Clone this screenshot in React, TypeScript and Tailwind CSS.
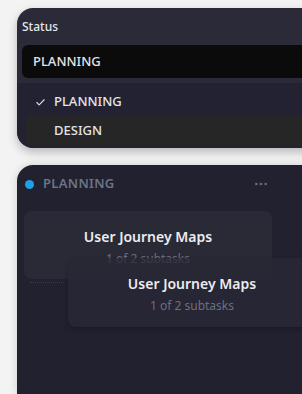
import { Check, MoreHorizontal } from 'lucide-react';

const font = { fontFamily: '"Noto Sans", "Open Sans", sans-serif' };

function TaskCard({ title, meta, className }: { title: string; meta: string; className?: string }) {
  return (
    <div className={`w-[248px] h-[68px] rounded-lg flex flex-col items-center pt-[15px] ${className ?? ''}`}>
      <div className="text-[14px] leading-[22px] font-semibold text-[#ececf1]">{title}</div>
      <div className="text-[12px] leading-[16px] mt-[3px] text-[#6e6e7c]">{meta}</div>
    </div>
  );
}

export default function App() {
  return (
    <div
      className="w-[302px] h-[394px] overflow-hidden bg-[#f3f3f3] pt-[8px] pl-[17px] flex flex-col gap-[17px]"
      style={font}
    >
      {/* status select with open menu */}
      <div className="w-[320px] rounded-2xl bg-[#2a2a39] shadow-[0_4px_10px_rgba(0,0,0,0.25)] overflow-hidden shrink-0">
        <div className="px-[5px] pt-[10px] pb-[5px]">
          <div className="text-[12px] leading-[18px] text-[#e6e6ec] font-medium">Status</div>
          <div className="mt-[9px] h-[33px] rounded-md bg-[#0b0b0c] flex items-center pl-[11px] text-[13px] font-medium text-[#e4e4e8]">
            PLANNING
          </div>
        </div>
        <div className="bg-[#222232] pl-[9px] pt-[5px] pb-[3px] rounded-b-2xl">
          <div className="h-[28px] flex items-center text-[13px] font-medium text-[#e4e4ea]">
            <Check className="w-[11px] h-[11px] ml-[9px] mr-[8px] text-[#d8d8de]" strokeWidth={2.5} />
            PLANNING
          </div>
          <div className="h-[29px] flex items-center pl-[28px] rounded-l bg-[#262626] text-[13px] font-medium text-[#e4e4ea]">
            DESIGN
          </div>
        </div>
      </div>

      {/* board column */}
      <div className="w-[320px] flex-1 rounded-tl-2xl bg-[#212130] shadow-[0_0_8px_rgba(0,0,0,0.15)] pt-[10px] pl-[7px]">
        <div className="flex items-center h-[18px] pr-[68px]">
          <span className="w-[9px] h-[9px] rounded-full bg-[#1ea1e8] ml-[1px]" />
          <span className="ml-[9px] text-[13px] font-semibold tracking-wide text-[#6c7486]">PLANNING</span>
          <MoreHorizontal className="ml-auto w-[16px] h-[16px] text-[#6a6a78]" />
        </div>
        <div className="relative mt-[18px]">
          <TaskCard title="User Journey Maps" meta="1 of 2 subtasks" className="bg-[#2a2a37]" />
          <div className="absolute top-[71px] left-[6px] w-[34px] border-t border-dotted border-[#3a3a48]" />
          <TaskCard
            title="User Journey Maps"
            meta="1 of 2 subtasks"
            className="absolute top-[47px] left-[44px] h-[69px] bg-[#282835]/75 shadow-[0_2px_6px_rgba(0,0,0,0.2)]"
          />
        </div>
      </div>
    </div>
  );
}
